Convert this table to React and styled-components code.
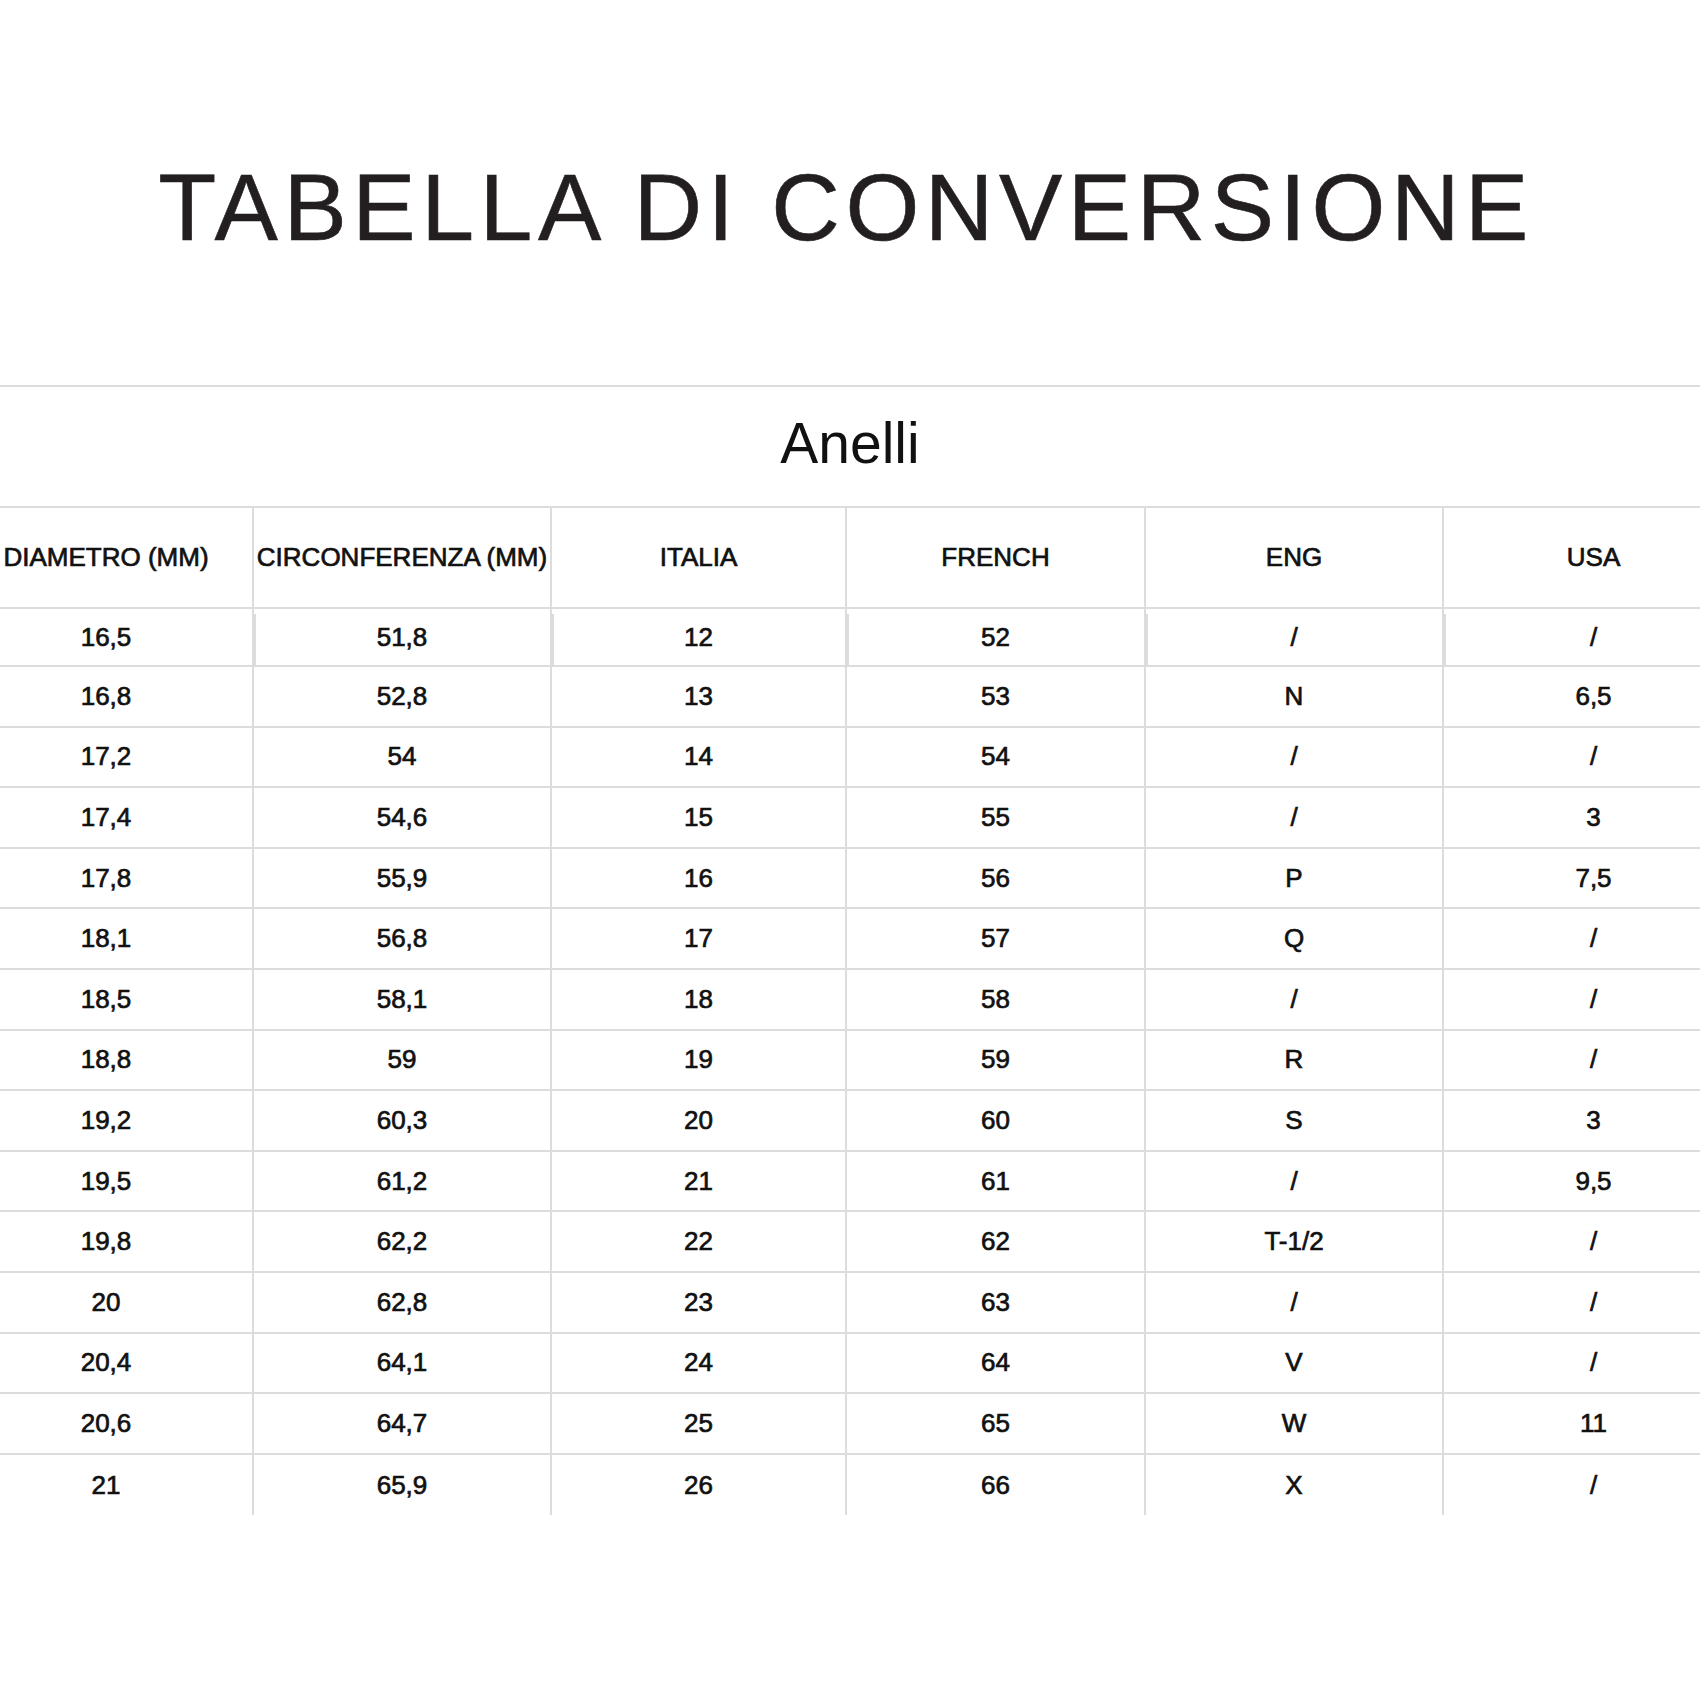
import React from "react";
import styled, { createGlobalStyle } from "styled-components";

const GlobalStyle = createGlobalStyle`
  html, body {
    margin: 0;
    padding: 0;
    background: #fff;
  }
  body {
    font-family: "Liberation Sans", Arial, sans-serif;
    color: #111;
  }
`;

const columns = ["DIAMETRO (MM)", "CIRCONFERENZA (MM)", "ITALIA", "FRENCH", "ENG", "USA"];

const rows = [
    ["16,5", "51,8", "12", "52", "/", "/"],
    ["16,8", "52,8", "13", "53", "N", "6,5"],
    ["17,2", "54", "14", "54", "/", "/"],
    ["17,4", "54,6", "15", "55", "/", "3"],
    ["17,8", "55,9", "16", "56", "P", "7,5"],
    ["18,1", "56,8", "17", "57", "Q", "/"],
    ["18,5", "58,1", "18", "58", "/", "/"],
    ["18,8", "59", "19", "59", "R", "/"],
    ["19,2", "60,3", "20", "60", "S", "3"],
    ["19,5", "61,2", "21", "61", "/", "9,5"],
    ["19,8", "62,2", "22", "62", "T-1/2", "/"],
    ["20", "62,8", "23", "63", "/", "/"],
    ["20,4", "64,1", "24", "64", "V", "/"],
    ["20,6", "64,7", "25", "65", "W", "11"],
    ["21", "65,9", "26", "66", "X", "/"],
];

const SizeGuide = () => {
    return (
        <Page>
            <GlobalStyle />
            <Title>TABELLA DI CONVERSIONE</Title>
            <Section>
                <SectionTitle>Anelli</SectionTitle>
                <TableClip>
                    <Table>
                        <HeadRow>
                            {columns.map((c) => (
                                <Cell key={c}>{c}</Cell>
                            ))}
                        </HeadRow>
                        {rows.map((r, i) => (
                            <Row key={i} $first={i === 0}>
                                {r.map((v, j) => (
                                    <Cell key={j}>{v}</Cell>
                                ))}
                            </Row>
                        ))}
                    </Table>
                </TableClip>
            </Section>
        </Page>
    );
};

export default SizeGuide;

const Page = styled.div`
    width: 1700px;
    min-height: 1700px;
    padding-top: 160px;
    box-sizing: border-box;
    overflow: hidden;
`;

const Title = styled.h1`
    margin: 0;
    padding-right: 8px;
    font-family: "Liberation Sans", Arial, sans-serif;
    font-weight: 400;
    font-size: 95px;
    line-height: 95px;
    letter-spacing: 5.5px;
    color: #231f20;
    text-align: center;
    -webkit-text-stroke: 0.6px #231f20;
`;

const Section = styled.section`
    margin-top: 130px;
    border-top: 2px solid #dcdcdc;
`;

const SectionTitle = styled.h2`
    margin: 0;
    height: 119px;
    padding-bottom: 6px;
    box-sizing: border-box;
    display: flex;
    align-items: center;
    justify-content: center;
    font-weight: 400;
    font-size: 57px;
    line-height: 1;
    color: #111;
`;

const TableClip = styled.div`
    border-top: 2px solid #dcdcdc;
`;

const Table = styled.div`
    width: 1783px;
    margin-left: -40px;
`;

const Row = styled.div`
    display: grid;
    grid-template-columns: 292px 298px 295px 299px 298px 301px;
    height: ${(p) => (p.$first ? "58px" : "60.6px")};
    border-bottom: 2px solid #dcdcdc;
    box-sizing: border-box;

    &:last-child {
        border-bottom: none;
    }

    ${(p) =>
        p.$first &&
        `
        & > div + div {
            border-left: none;
            background: linear-gradient(#dcdcdc, #dcdcdc) left 5px / 2px calc(100% - 5px) no-repeat;
        }
    `}
`;

const HeadRow = styled(Row)`
    height: 101px;
`;

const Cell = styled.div`
    display: flex;
    align-items: center;
    justify-content: center;
    font-size: 26px;
    color: #111;
    -webkit-text-stroke: 0.7px #111;
    white-space: nowrap;

    & + & {
        border-left: 2px solid #dcdcdc;
    }
`;
